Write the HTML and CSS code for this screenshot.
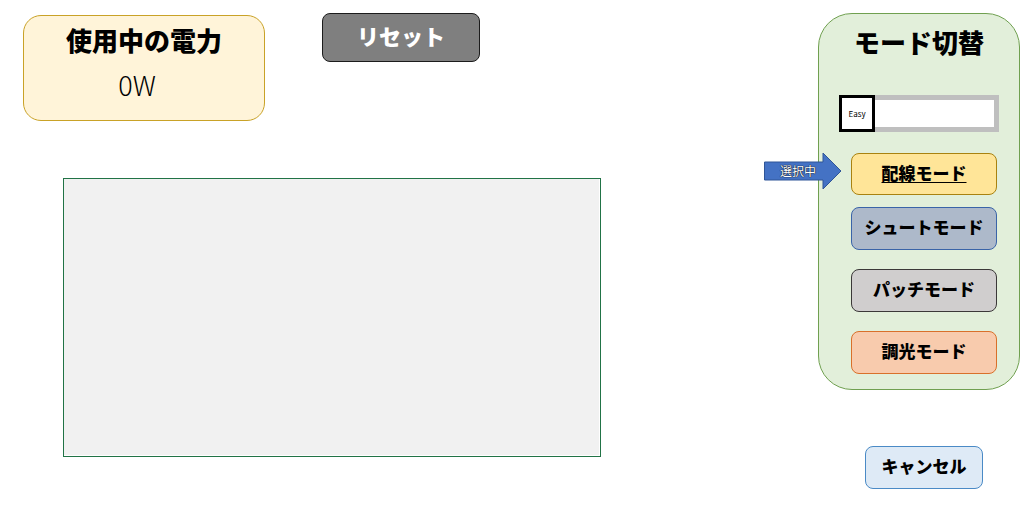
FILE: index.html
```html
<!DOCTYPE html>
<html lang="ja">
<head>
<meta charset="utf-8">
<meta name="viewport" content="width=device-width, initial-scale=1">
<title>モード切替</title>
<link rel="stylesheet" href="styles.css">
</head>
<body>
<div class="app">
  <main class="main">
    <header class="toolbar">
      <section class="power">
        <h1 class="title">使用中の電力</h1>
        <p class="power-value">0W</p>
      </section>
      <button class="button reset" type="button">リセット</button>
    </header>
    <div class="canvas"><div class="canvas-fill"></div></div>
  </main>
  <aside class="side">
    <section class="panel">
      <h2 class="title">モード切替</h2>
      <div class="level">
        <input class="level-range" id="level" type="range" min="0" max="2" value="0">
        <label class="level-label" for="level">Easy</label>
      </div>
      <div class="modes">
        <div class="mode-row">
          <div class="pointer">
            <svg class="pointer-shape" viewBox="0 0 78 38" aria-hidden="true"><path d="M.5 10H59V1L77 19 59 37V28H.5Z" fill="#4472c4" stroke="#2f5597"/></svg>
            <span class="pointer-text">選択中</span>
          </div>
          <button class="button wiring" type="button">配線モード</button>
        </div>
        <button class="button shoot" type="button">シュートモード</button>
        <button class="button patch" type="button">パッチモード</button>
        <button class="button dimmer" type="button">調光モード</button>
      </div>
    </section>
    <button class="button cancel" type="button">キャンセル</button>
  </aside>
</div>
</body>
</html>
```
FILE: styles.css
```css
* {
  box-sizing: border-box;
}

body {
  margin: 0;
  background: #fff;
  color: #000;
  font-family: "Noto Sans CJK JP", sans-serif;
}

.app {
  display: flex;
  justify-content: space-between;
  min-height: 100vh;
  padding: 13px 11px 26px 23px;
}

.main {
  display: flex;
  flex-direction: column;
  flex: 0 1 578px;
}

.toolbar {
  display: flex;
  align-items: flex-start;
  gap: 57px;
}

.power {
  flex: 0 0 242px;
  margin-top: 2px;
  padding: 4px 0 14px;
  border: 1px solid #c9a227;
  border-radius: 18px;
  background: #fff4d9;
  text-align: center;
}

.title {
  margin: 0;
  font-size: 26px;
  font-weight: 900;
  line-height: 40px;
}

.power-value {
  margin: 4px 14px 0 0;
  font-size: 27px;
  font-weight: 300;
  line-height: 42px;
}

.button {
  height: 43px;
  padding: 0 0 4px;
  border: 1px solid;
  border-radius: 8px;
  color: #000;
  font-family: inherit;
  font-size: 17px;
  font-weight: 900;
  line-height: 24px;
  cursor: pointer;
}

.reset {
  width: 158px;
  height: 49px;
  padding-bottom: 6px;
  border-color: #1c1c1c;
  background: #7f7f7f;
  color: #fff;
  font-size: 22px;
}

.canvas {
  display: flex;
  flex: 0 0 279px;
  margin: 57px 0 0 40px;
  padding: 0 1px 1px 0;
  border: 1px solid #217346;
}

.canvas-fill {
  flex: 1;
  background: #f1f1f1;
}

.side {
  flex: 0 0 202px;
}

.panel {
  padding: 8px 20px 15px;
  border: 1px solid #70a050;
  border-radius: 34px;
  background: #e2efda;
  text-align: center;
}

.level {
  position: relative;
  height: 37px;
  margin-top: 33px;
}

.level-range {
  appearance: none;
  display: block;
  width: 100%;
  height: 37px;
  margin: 0;
  border: 5px solid #bfbfbf;
  background: #fff;
}

.level-range::-webkit-slider-thumb {
  appearance: none;
  width: 36px;
  height: 37px;
  margin: -5px;
  border: 3px solid #000;
  border-radius: 0;
  background: #fff;
}

.level-label {
  position: absolute;
  top: 0;
  left: 0;
  width: 36px;
  font-size: 8px;
  line-height: 37px;
  pointer-events: none;
}

.modes {
  display: flex;
  flex-direction: column;
  gap: 19px;
  margin: 21px 2px 0 12px;
}

.mode-row {
  display: grid;
  position: relative;
}

.wiring {
  height: 42px;
  padding-bottom: 2px;
  border-color: #a98210;
  background: #ffe598;
  text-decoration: underline;
  text-decoration-thickness: 1px;
  text-underline-offset: 2px;
}

.shoot {
  margin-top: -7px;
  border-color: #3a64a8;
  background: #adb9ca;
}

.patch {
  border-color: #3b3838;
  background: #d0cece;
}

.dimmer {
  border-color: #d9702a;
  background: #f8cbad;
}

.cancel {
  display: block;
  width: 118px;
  margin: 56px auto 0 47px;
  border-color: #4a8ac6;
  background: #deeaf6;
}

.pointer {
  position: absolute;
  top: -1px;
  right: 155px;
  width: 78px;
  height: 38px;
}

.pointer-shape {
  display: block;
}

.pointer-text {
  position: absolute;
  inset: 0 10px 0 0;
  color: #fff;
  font-size: 12px;
  line-height: 37px;
  text-shadow: 0 0 1px #000, 0 0 1px #000;
}
```
